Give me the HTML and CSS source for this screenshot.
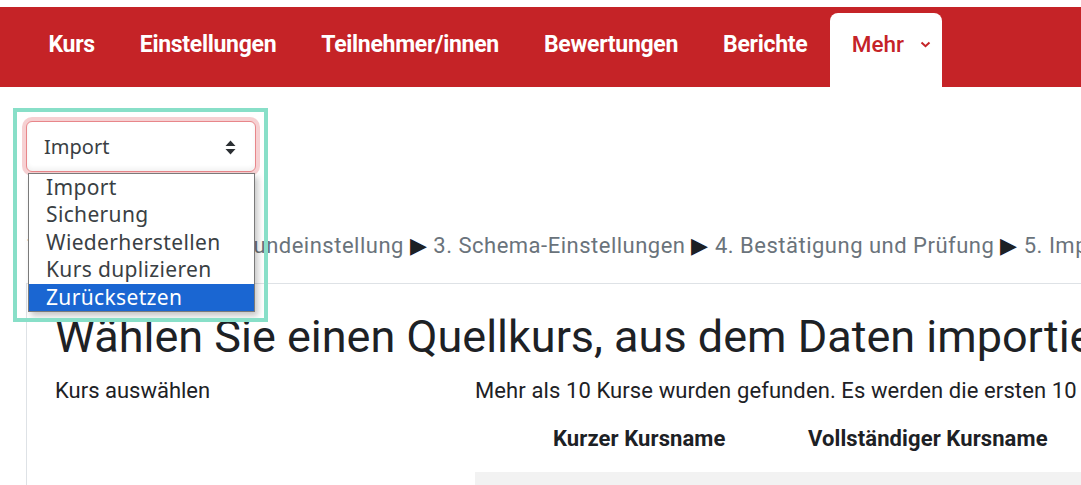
FILE: index.html
```html
<!DOCTYPE html>
<html lang="de">
<head>
<meta charset="utf-8">
<title>Import</title>
<link rel="stylesheet" href="styles.css">
</head>
<body>
<header class="topband">
  <nav class="secnav">
    <a class="navitem">Kurs</a>
    <a class="navitem">Einstellungen</a>
    <a class="navitem">Teilnehmer/innen</a>
    <a class="navitem">Bewertungen</a>
    <a class="navitem">Berichte</a>
    <a class="navitem navmore">Mehr
      <svg class="chev" width="11" height="7" viewBox="0 0 11 7"><path d="M1.5 1.5 L5.5 5.2 L9.5 1.5" fill="none" stroke="#c52327" stroke-width="2"/></svg>
    </a>
  </nav>
</header>
<main class="page">
  <div class="selectwrap">
    <div class="fakeselect">
      <span>Import</span>
      <svg class="updown" width="11" height="15" viewBox="0 0 11 15"><path d="M5.5 0.5 L10.5 6 L0.5 6 Z M0.5 9 L10.5 9 L5.5 14.5 Z" fill="#2b2f33"/></svg>
    </div>
    <ul class="optlist">
      <li>Import</li>
      <li>Sicherung</li>
      <li>Wiederherstellen</li>
      <li>Kurs duplizieren</li>
      <li class="sel">Zurücksetzen</li>
    </ul>
    <div class="annot"></div>
  </div>
  <div class="crumbs"><strong>1. Kursauswahl</strong> <span class="sep">▶</span> 2. Grundeinstellung <span class="sep">▶</span> 3. Schema-Einstellungen <span class="sep">▶</span> 4. Bestätigung und Prüfung <span class="sep">▶</span> 5. Import durchführen <span class="sep">▶</span> 6. Abgeschlossen</div>
  <section class="card">
    <h2 class="title">Wählen Sie einen Quellkurs, aus dem Daten importiert werden sollen:</h2>
    <div class="cols">
      <div class="lcol">Kurs auswählen</div>
      <div class="rcol">
        <p class="found">Mehr als 10 Kurse wurden gefunden. Es werden die ersten 10 Ergebnisse angezeigt.</p>
        <div class="thead">
          <span class="th th1">Kurzer Kursname</span>
          <span class="th th2">Vollständiger Kursname</span>
        </div>
        <div class="row"></div>
      </div>
    </div>
  </section>
</main>
</body>
</html>
```
FILE: styles.css
```css
html, body {
  margin: 0;
  padding: 0;
  background: #fff;
  overflow: hidden;
  width: 1081px;
  height: 485px;
}
body {
  font-family: Roboto, "Liberation Sans", sans-serif;
  color: #1d2125;
}
.topband {
  padding-top: 7px;
}
.secnav {
  background: #c52327;
  height: 80px;
  display: flex;
  align-items: stretch;
  padding-left: 26px;
}
.navitem {
  display: flex;
  align-items: center;
  padding: 0 22.5px 6px;
  color: #fff;
  font-weight: 700;
  font-size: 23px;
  letter-spacing: -0.3px;
  white-space: nowrap;
}
.navmore {
  margin-top: 6px;
  padding: 0 10px 12px 22px;
  background: #fff;
  color: #c52327;
  font-weight: 500;
  font-size: 22.5px;
  letter-spacing: 0;
  border-radius: 8px 8px 0 0;
  gap: 16px;
  width: 80px;
}
.chev { margin-top: 1px; }
.page {
  padding-top: 34px;
}
.selectwrap {
  position: relative;
  margin-left: 26px;
  width: 230px;
}
.fakeselect {
  box-sizing: border-box;
  width: 230px;
  height: 51px;
  border: 1px solid #e8868a;
  border-radius: 6px;
  box-shadow: 0 0 0 4px rgba(235, 150, 155, 0.45), inset 0 -3px 4px rgba(0,0,0,0.05);
  display: flex;
  align-items: center;
  justify-content: space-between;
  padding: 0 19px 0 17px;
  font-family: "Noto Sans", "Open Sans", sans-serif;
  font-size: 20px;
  color: #3a3f44;
  background: #fff;
}
.updown { margin-top: 2px; }
.optlist {
  position: absolute;
  left: 2px;
  top: 52px;
  width: 227px;
  box-sizing: border-box;
  margin: 0;
  padding: 0;
  list-style: none;
  background: #fff;
  border: 1px solid #7a7a7a;
  box-shadow: 3px 4px 6px rgba(0,0,0,0.22);
  font-family: "Noto Sans", "Open Sans", sans-serif;
  font-size: 21px;
  letter-spacing: 0.35px;
  color: #3a3f44;
  z-index: 2;
}
.optlist li {
  height: 27.4px;
  line-height: 27px;
  padding-left: 17px;
  white-space: nowrap;
}
.optlist li.sel {
  background: #1a66d2;
  color: #fff;
}
.annot {
  position: absolute;
  left: -13px;
  top: -13px;
  width: 255px;
  height: 214px;
  box-sizing: border-box;
  border: 4px solid #88dfc8;
  z-index: 3;
  pointer-events: none;
}
.crumbs {
  margin: 62px 0 0 26px;
  font-size: 22px;
  color: #6a737b;
  white-space: nowrap;
  letter-spacing: 0.5px;
  height: 24px;
  line-height: 24px;
}
.crumbs strong { font-weight: 400; letter-spacing: 0; }
.crumbs .sep { color: #1d2125; }
.card {
  margin: 25px 0 0 26px;
  border-top: 1px solid #dee2e6;
  border-left: 1px solid #dee2e6;
  padding: 28px 0 0 28px;
  white-space: nowrap;
}
.title {
  margin: 0;
  font-weight: 400;
  font-size: 45px;
  line-height: 50px;
  color: #1d2125;
}
.cols {
  display: flex;
  margin-top: 17px;
}
.lcol {
  width: 420px;
  font-size: 22px;
  line-height: 24px;
}
.rcol {
  flex: 1;
  min-width: 0;
}
.found {
  margin: 0;
  font-size: 22px;
  line-height: 24px;
  letter-spacing: 0.1px;
}
.thead {
  display: flex;
  margin-top: 23px;
  height: 46px;
  align-items: flex-start;
  font-weight: 700;
  font-size: 22px;
  line-height: 26px;
  letter-spacing: 0.1px;
}
.th1 { margin-left: 78px; width: 255px; }
.row {
  height: 40px;
  background: #f2f2f2;
}
```
